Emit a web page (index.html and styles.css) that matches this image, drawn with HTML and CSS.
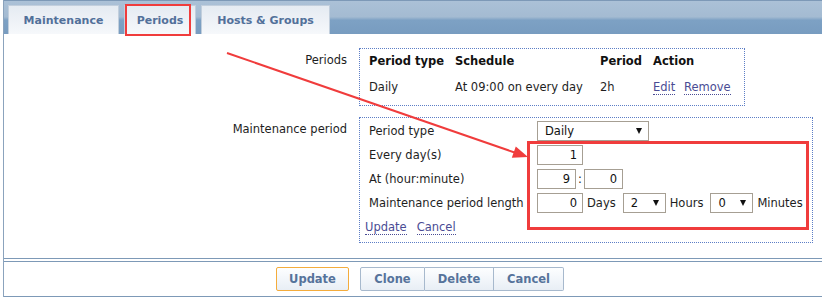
FILE: index.html
```html
<!DOCTYPE html>
<html lang="en">
<head>
  <meta charset="UTF-8">
  <meta name="viewport" content="width=device-width, initial-scale=1.0">
  <title>Maintenance periods</title>
  <link rel="stylesheet" href="styles.css">
</head>
<body>
  <div class="frame">
    <div class="tabbar">
      <div class="tab t-maint">Maintenance</div>
      <div class="tab t-periods">Periods</div>
      <div class="tab t-hosts">Hosts &amp; Groups</div>
    </div>

    <div class="content">
      <div class="form-row">
        <div class="label">Periods</div>
        <div class="box periods">
          <table>
            <tr class="head">
              <th class="c-type">Period type</th>
              <th class="c-sched">Schedule</th>
              <th class="c-period">Period</th>
              <th>Action</th>
            </tr>
            <tr>
              <td>Daily</td>
              <td>At 09:00 on every day</td>
              <td>2h</td>
              <td><a href="#" class="link">Edit</a> <a href="#" class="link">Remove</a></td>
            </tr>
          </table>
        </div>
      </div>

      <div class="form-row">
        <div class="label">Maintenance period</div>
        <div class="box period-form">
          <div class="prow">
            <span class="plabel">Period type</span>
            <span class="select wide"><select><option>Daily</option></select></span>
          </div>
          <div class="prow">
            <span class="plabel">Every day(s)</span>
            <input type="text" class="num w46" value="1">
          </div>
          <div class="prow">
            <span class="plabel">At (hour:minute)</span>
            <input type="text" class="num w39" value="9">
            <span class="colon">:</span>
            <input type="text" class="num w39" value="0">
          </div>
          <div class="prow">
            <span class="plabel">Maintenance period length</span>
            <input type="text" class="num w46" value="0">
            <span class="unit">Days</span>
            <span class="select small"><select><option>2</option></select></span>
            <span class="unit">Hours</span>
            <span class="select small"><select><option>0</option></select></span>
            <span class="unit">Minutes</span>
          </div>
          <div class="prow links">
            <a href="#" class="link">Update</a>
            <a href="#" class="link">Cancel</a>
          </div>
        </div>
      </div>
    </div>

    <div class="footer">
      <button class="btn primary">Update</button>
      <div class="btn-group">
        <button class="btn">Clone</button>
        <button class="btn">Delete</button>
        <button class="btn">Cancel</button>
      </div>
    </div>
  </div>

  <!-- screenshot annotations -->
  <svg class="annot" width="822" height="298" viewBox="0 0 822 298">
    <rect x="126" y="5" width="64" height="30" fill="none" stroke="#f03c3c" stroke-width="2"/>
    <rect x="528.5" y="142.5" width="279" height="86" fill="none" stroke="#f03c3c" stroke-width="3"/>
    <line x1="227" y1="53" x2="516" y2="153" stroke="#f03c3c" stroke-width="2"/>
    <polygon points="528,157 511.8,157.8 515.8,146.4" fill="#f03c3c"/>
  </svg>
</body>
</html>
```

FILE: styles.css
```css
* {
  margin: 0;
  padding: 0;
  box-sizing: border-box;
}

body {
  position: relative;
  width: 822px;
  height: 298px;
  overflow: hidden;
  background-color: #fff;
  color: #1e1e1e;
  font-family: 'DejaVu Sans', Verdana, sans-serif;
  font-size: 11.5px;
}

.frame {
  margin-left: 3px;
  border-left: 1px solid #8ba3bd;
}

/* tabs */
.tabbar {
  height: 34px;
  display: flex;
  align-items: flex-end;
  gap: 5px;
  padding-left: 4px;
  border-top: 1px solid #7d99b7;
  background: linear-gradient(#abc1d7 0%, #a4bbd2 48%, #7da1c4 58%, #789cc0 100%);
}

.tab {
  height: 29px;
  display: flex;
  align-items: center;
  justify-content: center;
  border: 1px solid #c2cfdd;
  border-bottom: none;
  background: linear-gradient(#e5ebf2, #f6f8fb);
  color: #52709a;
  font-weight: bold;
  font-size: 11px;
}

.t-maint { width: 111px; }
.t-periods { width: 72px; }
.t-hosts { width: 129px; }

/* main form */
.content {
  padding: 14px 0 15px;
  border-bottom: 1px solid #7d99b7;
  display: flex;
  flex-direction: column;
  gap: 11px;
}

.form-row {
  display: flex;
  gap: 12px;
}

.label {
  width: 343px;
  text-align: right;
  padding-top: 5px;
  line-height: 14px;
}

.box {
  border: 1px dotted #5d7ec6;
}

.periods {
  width: 386px;
  padding: 0 9px 4px;
}

.periods table {
  border-collapse: collapse;
}

.periods th {
  height: 24px;
  text-align: left;
  font-weight: bold;
  color: #111;
}

.periods td {
  height: 28px;
}

.c-type { width: 86px; }
.c-sched { width: 145px; }
.c-period { width: 53px; }

.link {
  color: #4a4c94;
  text-decoration: none;
  border-bottom: 1px dotted #4a4c94;
}

.link + .link {
  margin-left: 5px;
}

.period-form {
  width: 454px;
  padding: 1px 9px 3px;
}

.prow {
  height: 24px;
  display: flex;
  align-items: center;
}

.plabel {
  width: 168px;
  flex-shrink: 0;
}

.prow.links {
  margin-left: -4px;
}

.prow.links .link + .link {
  margin-left: 10px;
}

input.num {
  height: 20px;
  border: 1px solid #a69f93;
  padding: 0 5px 0 0;
  text-align: right;
  font-family: inherit;
  font-size: 11.5px;
  color: #111;
  background: #fff;
}

.w46 { width: 46px; }
.w39 { width: 39px; }

.colon {
  width: 8px;
  text-align: center;
}

.unit {
  margin: 0 7px 0 4px;
}

.select {
  position: relative;
  display: inline-block;
}

.select select {
  appearance: none;
  -webkit-appearance: none;
  height: 20px;
  border: 1px solid #a69f93;
  border-radius: 0;
  padding: 0 0 0 7px;
  background: #fff;
  font-family: inherit;
  font-size: 11.5px;
  color: #111;
}

.select::after {
  content: '';
  position: absolute;
  right: 7px;
  top: 7px;
  border-left: 3px solid transparent;
  border-right: 3px solid transparent;
  border-top: 6px solid #111;
}

.select.wide select { width: 112px; }
.select.small select { width: 43px; }

/* footer buttons */
.footer {
  margin-top: 2px;
  height: 36px;
  border-top: 1px solid #7d99b7;
  border-bottom: 1px solid #7d99b7;
  display: flex;
  align-items: center;
  gap: 11px;
  padding-left: 272px;
}

.btn-group {
  display: flex;
}

.btn {
  height: 24px;
  padding: 0;
  border: 1px solid #a7b9cd;
  border-radius: 2px;
  background: linear-gradient(#fdfeff, #e8eef5);
  color: #56739b;
  font-family: inherit;
  font-weight: bold;
  font-size: 11.5px;
}

.btn.primary {
  width: 73px;
  border-color: #f4ac3c;
}

.btn-group .btn {
  border-radius: 0;
}

.btn-group .btn + .btn {
  border-left: none;
}

.btn-group .btn:first-child { width: 65px; border-radius: 2px 0 0 2px; }
.btn-group .btn:nth-child(2) { width: 69px; }
.btn-group .btn:last-child { width: 70px; border-radius: 0 2px 2px 0; }

.annot {
  position: absolute;
  left: 0;
  top: 0;
  pointer-events: none;
}
```
